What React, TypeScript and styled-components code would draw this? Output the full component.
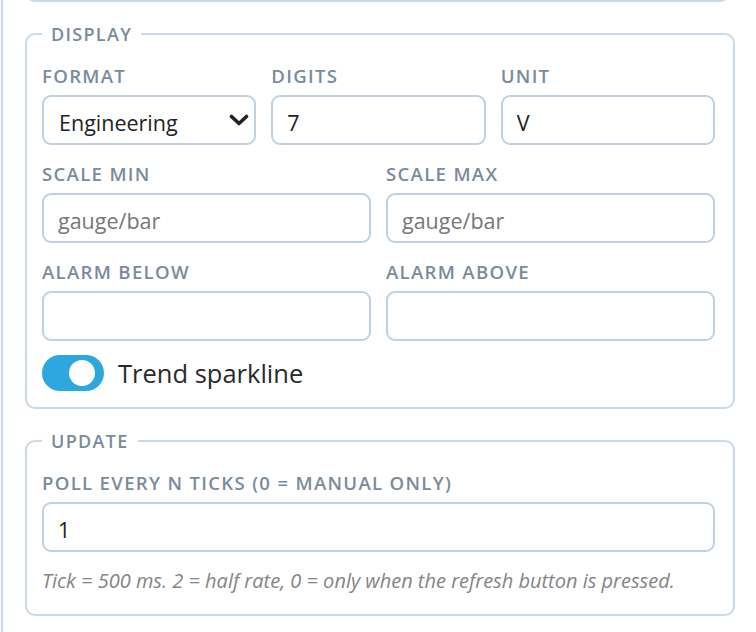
import React, { useState } from "react";
import styled, { createGlobalStyle } from "styled-components";

const Global = createGlobalStyle`
  html, body {
    margin: 0;
    padding: 0;
    background: #fff;
  }
  body {
    font-family: "Open Sans", "Noto Sans", "Liberation Sans", sans-serif;
    color: #222;
  }
`;

const Viewport = styled.div`
  height: 632px;
  overflow: hidden;
`;

const Panel = styled.div`
  margin-left: 1px;
  min-height: 680px;
  border-left: 2px solid #cad9e9;
  padding: 0 21px 0 22px;
  box-sizing: border-box;
`;

const PrevEnd = styled.div`
  height: 12px;
  margin-top: -10px;
  border: 2px solid #c9d9ea;
  border-top: none;
  border-radius: 0 0 10px 10px;
  margin-right: 5px;
  box-sizing: border-box;
`;

const Section = styled.fieldset`
  margin: 20px 0 0;
  border: 2px solid #c9d9ea;
  border-radius: 10px;
  padding: 19px 18px 16px 15px;
  min-width: 0;
`;

const Legend = styled.legend`
  padding: 0 9px;
  font-size: 18px;
  line-height: 24px;
  font-weight: 600;
  letter-spacing: 1.3px;
  color: #7b8b9b;
  text-transform: uppercase;
`;

const Grid = styled.div<{ cols: number }>`
  display: grid;
  grid-template-columns: repeat(${({ cols }) => cols}, 1fr);
  column-gap: 15px;
  margin-bottom: 18px;
`;

const Field = styled.label`
  display: flex;
  flex-direction: column;
  gap: 8px;
  min-width: 0;
`;

const Label = styled.span`
  font-size: 18.6px;
  line-height: 22px;
  font-weight: 600;
  letter-spacing: 1.3px;
  color: #7b8b9b;
  text-transform: uppercase;
  white-space: nowrap;
`;

const Input = styled.input`
  box-sizing: border-box;
  width: 100%;
  height: 50px;
  border: 2px solid #bfd1e2;
  border-radius: 9px;
  padding: 4px 14px 0;
  font-family: inherit;
  font-size: 21.5px;
  color: #222;
  background: #fff;
  outline: none;
  &::placeholder {
    color: #777;
  }
`;

const SelectWrap = styled.div`
  position: relative;
`;

const Select = styled.select`
  box-sizing: border-box;
  width: 100%;
  height: 50px;
  border: 2px solid #bfd1e2;
  border-radius: 9px;
  padding: 4px 40px 0 15px;
  font-family: inherit;
  font-size: 21.5px;
  color: #222;
  background: #fff;
  appearance: none;
  outline: none;
`;

const Chevron = styled.svg`
  position: absolute;
  right: 7px;
  top: 19px;
  pointer-events: none;
`;

const ToggleRow = styled.label`
  display: flex;
  align-items: center;
  gap: 14px;
  margin-top: -4px;
  cursor: pointer;
`;

const Track = styled.span<{ on: boolean }>`
  position: relative;
  width: 62px;
  height: 36px;
  border-radius: 18px;
  background: ${({ on }) => (on ? "#2ea7e0" : "#c3cdd6")};
  flex-shrink: 0;
`;

const Knob = styled.span<{ on: boolean }>`
  position: absolute;
  top: 5px;
  left: ${({ on }) => (on ? "27px" : "6px")};
  width: 26px;
  height: 26px;
  border-radius: 50%;
  background: #fff;
`;

const ToggleText = styled.span`
  font-size: 25.5px;
  line-height: 36px;
  color: #2a2a2a;
`;

const Hint = styled.div`
  margin: 16px 0 4px;
  font-size: 20px;
  line-height: 26px;
  font-style: italic;
  color: #858585;
  white-space: nowrap;
`;

export default function App() {
  const [trend, setTrend] = useState(true);
  return (
    <Viewport>
      <Global />
      <Panel>
        <PrevEnd />
        <Section>
          <Legend>Display</Legend>
          <Grid cols={3}>
            <Field>
              <Label>Format</Label>
              <SelectWrap>
                <Select defaultValue="eng">
                  <option value="fixed">Fixed</option>
                  <option value="sci">Scientific</option>
                  <option value="eng">Engineering</option>
                </Select>
                <Chevron width="20" height="13" viewBox="0 0 20 13">
                  <path d="M2.5 2.5 L10 9.5 L17.5 2.5" fill="none" stroke="#222" strokeWidth="3.6" strokeLinecap="round" strokeLinejoin="round" />
                </Chevron>
              </SelectWrap>
            </Field>
            <Field>
              <Label>Digits</Label>
              <Input defaultValue="7" />
            </Field>
            <Field>
              <Label>Unit</Label>
              <Input defaultValue="V" />
            </Field>
          </Grid>
          <Grid cols={2}>
            <Field>
              <Label>Scale min</Label>
              <Input placeholder="gauge/bar" />
            </Field>
            <Field>
              <Label>Scale max</Label>
              <Input placeholder="gauge/bar" />
            </Field>
          </Grid>
          <Grid cols={2}>
            <Field>
              <Label>Alarm below</Label>
              <Input />
            </Field>
            <Field>
              <Label>Alarm above</Label>
              <Input />
            </Field>
          </Grid>
          <ToggleRow onClick={() => setTrend(!trend)}>
            <Track on={trend}>
              <Knob on={trend} />
            </Track>
            <ToggleText>Trend sparkline</ToggleText>
          </ToggleRow>
        </Section>
        <Section>
          <Legend>Update</Legend>
          <Field>
            <Label>Poll every N ticks (0 = manual only)</Label>
            <Input defaultValue="1" />
          </Field>
          <Hint>Tick = 500 ms. 2 = half rate, 0 = only when the refresh button is pressed.</Hint>
        </Section>
      </Panel>
    </Viewport>
  );
}
